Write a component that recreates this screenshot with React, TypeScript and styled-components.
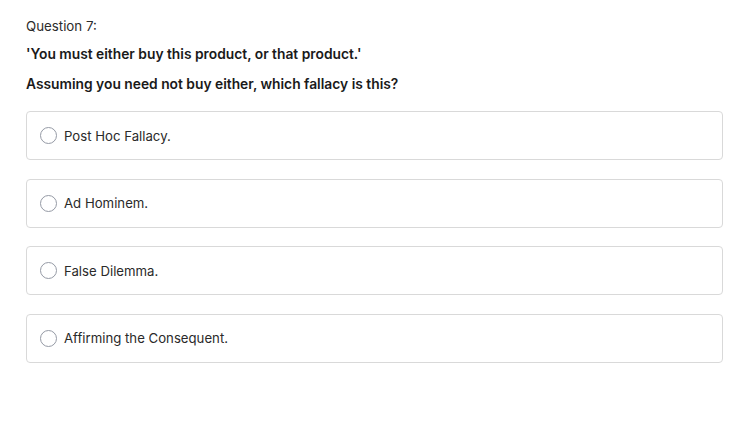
import React from "react";
import styled, { createGlobalStyle } from "styled-components";

const Global = createGlobalStyle`
  html, body { margin: 0; padding: 0; background: #fff; }
  body { font-family: Inter, "Noto Sans", sans-serif; color: #1f1f1f; }
`;

const Page = styled.div`
  padding: 16px 27px 0 26px;
  display: flex;
  flex-direction: column;
`;

const Label = styled.div`
  font-size: 13.3px;
  line-height: 20px;
  color: #2b2b2b;
  margin-bottom: 8px;
`;

const Prompt = styled.div`
  font-size: 13.8px;
  line-height: 20px;
  font-weight: 600;
  color: #1a1a1a;
  margin-bottom: 10px;
`;

const Options = styled.div`
  display: flex;
  flex-direction: column;
  gap: 18.6px;
  margin-top: 7px;
`;

const Option = styled.label`
  display: flex;
  align-items: center;
  gap: 7px;
  height: 49px;
  box-sizing: border-box;
  padding: 0 13px;
  border: 1px solid #d9d9d9;
  border-radius: 4px;
  font-size: 13.2px;
  color: #2a2a2a;
  cursor: pointer;
`;

const Radio = styled.span`
  width: 17px;
  height: 17px;
  box-sizing: border-box;
  border: 1px solid #959aa5;
  border-radius: 50%;
  flex: none;
`;

const options = [
  "Post Hoc Fallacy.",
  "Ad Hominem.",
  "False Dilemma.",
  "Affirming the Consequent.",
];

export default function App() {
  return (
    <>
      <Global />
      <Page>
        <Label>Question 7:</Label>
        <Prompt>'You must either buy this product, or that product.'</Prompt>
        <Prompt>Assuming you need not buy either, which fallacy is this?</Prompt>
        <Options>
          {options.map((o) => (
            <Option key={o}>
              <Radio />
              {o}
            </Option>
          ))}
        </Options>
      </Page>
    </>
  );
}
